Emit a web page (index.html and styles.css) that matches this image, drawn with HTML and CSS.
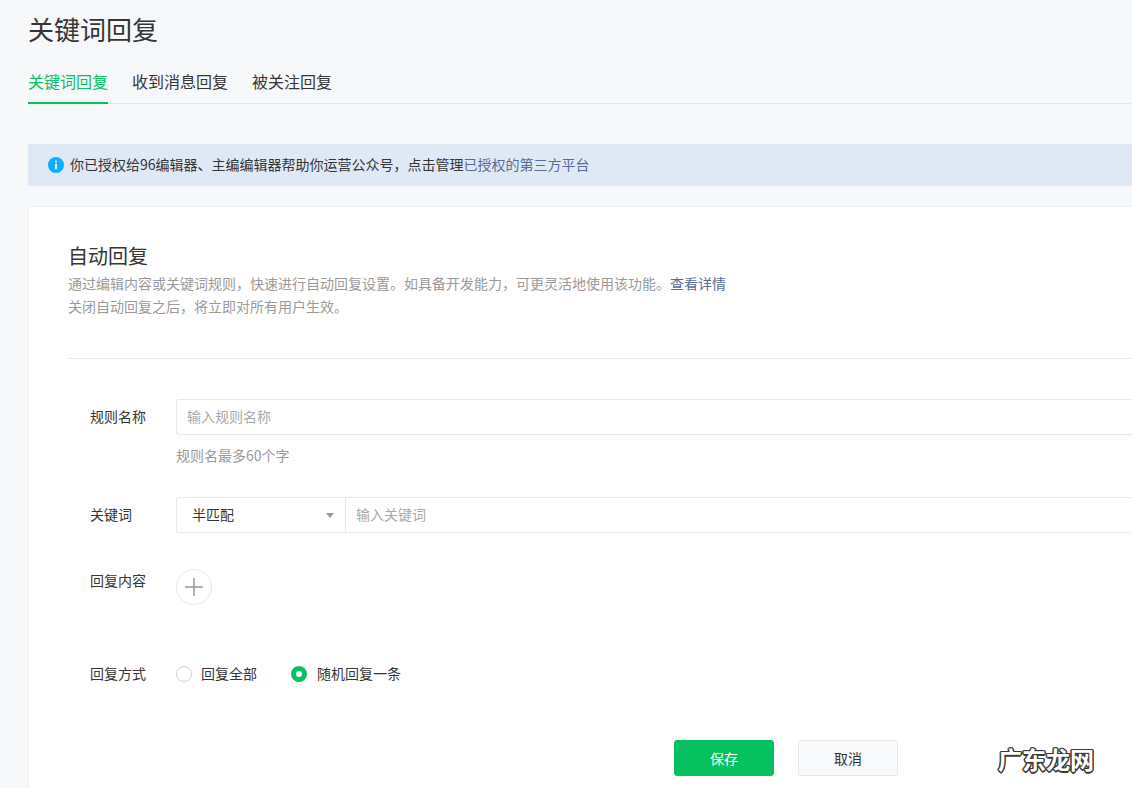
FILE: index.html
```html
<!DOCTYPE html>
<html lang="zh-CN">
<head>
<meta charset="utf-8">
<title>关键词回复</title>
<link rel="stylesheet" href="styles.css">
</head>
<body>
<main class="page">
  <h1 class="page-title">关键词回复</h1>
  <nav class="tabs">
    <a class="tab tab-active">关键词回复</a>
    <a class="tab">收到消息回复</a>
    <a class="tab">被关注回复</a>
  </nav>
  <div class="notice">
    <svg class="notice-icon" viewBox="0 0 16 16" width="16" height="16"><circle cx="8" cy="8" r="8" fill="#10aeff"/><rect x="7.2" y="3.6" width="1.6" height="1.8" fill="#fff"/><rect x="7.2" y="6.6" width="1.6" height="5.6" fill="#fff"/></svg>
    <span class="notice-text">你已授权给96编辑器、主编编辑器帮助你运营公众号，点击管理<a class="link">已授权的第三方平台</a></span>
  </div>
  <section class="card">
    <header class="card-head">
      <h2 class="card-title">自动回复</h2>
      <p class="card-desc">通过编辑内容或关键词规则，快速进行自动回复设置。如具备开发能力，可更灵活地使用该功能。<a class="link-strong">查看详情</a><br>关闭自动回复之后，将立即对所有用户生效。</p>
    </header>
    <form class="form">
      <div class="row row-name">
        <label class="label">规则名称</label>
        <div class="field">
          <div class="box"><input class="input" placeholder="输入规则名称"></div>
          <p class="hint">规则名最多60个字</p>
        </div>
      </div>
      <div class="row row-key">
        <label class="label">关键词</label>
        <div class="field">
          <div class="box">
            <div class="select"><span>半匹配</span><i class="caret"></i></div>
            <input class="input input-key" placeholder="输入关键词">
          </div>
        </div>
      </div>
      <div class="row row-content">
        <label class="label label-content">回复内容</label>
        <div class="add">
          <svg viewBox="0 0 18 18" width="18" height="18"><path d="M8.25 0h1.5v18h-1.5zM0 8.25h18v1.5H0z" fill="#999"/></svg>
        </div>
      </div>
      <div class="row row-mode">
        <label class="label">回复方式</label>
        <div class="radios">
          <span class="radio"><i class="dot"></i><span class="radio-text">回复全部</span></span>
          <span class="radio"><i class="dot dot-on"></i><span class="radio-text">随机回复一条</span></span>
        </div>
      </div>
      <div class="actions">
        <button type="button" class="btn btn-primary">保存</button>
        <button type="button" class="btn">取消</button>
      </div>
    </form>
  </section>
</main>
<div class="watermark">广东龙网</div>
</body>
</html>
```
FILE: styles.css
```css
* { box-sizing: border-box; }
html, body { height: 100%; }
body {
  margin: 0;
  height: 788px;
  overflow: hidden;
  background: #f7f8fa;
  color: #353535;
  font-family: "Noto Sans CJK SC", "Noto Sans", sans-serif;
  font-size: 14px;
}
.page { padding: 10px 0 0 28px; }
.page-title {
  margin: 0;
  font-size: 26px;
  font-weight: 400;
  line-height: 38px;
}
.tabs {
  display: flex;
  gap: 24px;
  height: 56px;
  padding-top: 20px;
  border-bottom: 1px solid #e4e8eb;
}
.tab {
  height: 36px;
  font-size: 16px;
  line-height: 26px;
  color: #353535;
}
.tab-active {
  color: #07c160;
  border-bottom: 2px solid #07c160;
}
.notice {
  display: flex;
  align-items: center;
  height: 42px;
  margin-top: 40px;
  padding-left: 20px;
  background: #dfe8f5;
}
.notice-text { line-height: 22px; padding-bottom: 2px; }
.notice-icon { margin-right: 6px; flex: none; }
.link { color: #576b95; }
.card {
  height: 600px;
  margin-top: 20px;
  padding: 34px 0 0 39px;
  background: #fff;
  border: 1px solid #f0f1f3;
  border-width: 1px 0 0 1px;
  border-radius: 4px 0 0 0;
}
.card-head {
  height: 118px;
  border-bottom: 1px solid #e4e8eb;
}
.card-title {
  margin: 0;
  font-size: 20px;
  font-weight: 400;
  line-height: 30px;
}
.card-desc {
  margin: 0;
  padding-top: 1px;
  color: #9a9a9a;
  line-height: 23px;
}
.link-strong { color: #576b95; }
.form { padding-top: 40px; }
.row { display: flex; }
.label {
  flex: none;
  width: 108px;
  padding-left: 22px;
  line-height: 34px;
  color: #353535;
}
.field { flex: 1; min-width: 0; }
.box {
  display: flex;
  height: 36px;
  background: #fff;
  border: 1px solid #e4e8eb;
  border-right: 0;
  border-radius: 3px 0 0 3px;
}
.input {
  flex: 1;
  min-width: 0;
  padding: 0 10px 2px;
  border: 0;
  outline: 0;
  background: transparent;
  color: #353535;
  font: inherit;
}
.input::placeholder { color: #a9a9a9; opacity: 1; }
.hint {
  margin: 9px 0 0;
  color: #9a9a9a;
  line-height: 22px;
}
.row-key { margin-top: 31px; }
.select {
  display: flex;
  align-items: center;
  justify-content: space-between;
  flex: none;
  width: 169px;
  padding: 0 11px 2px 15px;
  border-right: 1px solid #e4e8eb;
}
.caret {
  width: 0;
  height: 0;
  margin-top: 2px;
  border-style: solid;
  border-width: 5px 4.5px 0;
  border-color: #999 transparent transparent;
}
.row-content { margin-top: 36px; }
.label-content { line-height: 22px; }
.add {
  display: flex;
  align-items: center;
  justify-content: center;
  width: 36px;
  height: 36px;
  border: 1px solid #e4e8eb;
  border-radius: 50%;
}
.row-mode { margin-top: 51px; }
.radios { display: flex; gap: 34px; align-items: center; padding-top: 2px; }
.radio { display: flex; align-items: center; }
.radio-text { margin-top: -2px; }
.dot {
  width: 16px;
  height: 16px;
  margin-right: 9px;
  border: 1px solid #cfd2d6;
  border-radius: 50%;
  background: #fff;
}
.dot-on { margin-right: 10px; border: 5px solid #07c160; }
.actions {
  display: flex;
  gap: 24px;
  margin-top: 50px;
  padding-left: 606px;
}
.btn {
  width: 100px;
  height: 36px;
  padding: 0;
  border: 1px solid #e4e8eb;
  border-radius: 3px;
  background: #f8f9fa;
  color: #353535;
  font: inherit;
}
.btn-primary {
  background: #07c160;
  border-color: #07c160;
  color: #fff;
}
.watermark {
  position: absolute;
  left: 998px;
  top: 741px;
  color: #fff;
  font-size: 24px;
  font-weight: 700;
  line-height: 36px;
  text-shadow: 1.5px 0 0 #3a3a3a, -1.5px 0 0 #3a3a3a, 0 1.5px 0 #3a3a3a, 0 -1.5px 0 #3a3a3a, 1.1px 1.1px 0 #3a3a3a, -1.1px 1.1px 0 #3a3a3a, 1.1px -1.1px 0 #3a3a3a, -1.1px -1.1px 0 #3a3a3a;
}
```
